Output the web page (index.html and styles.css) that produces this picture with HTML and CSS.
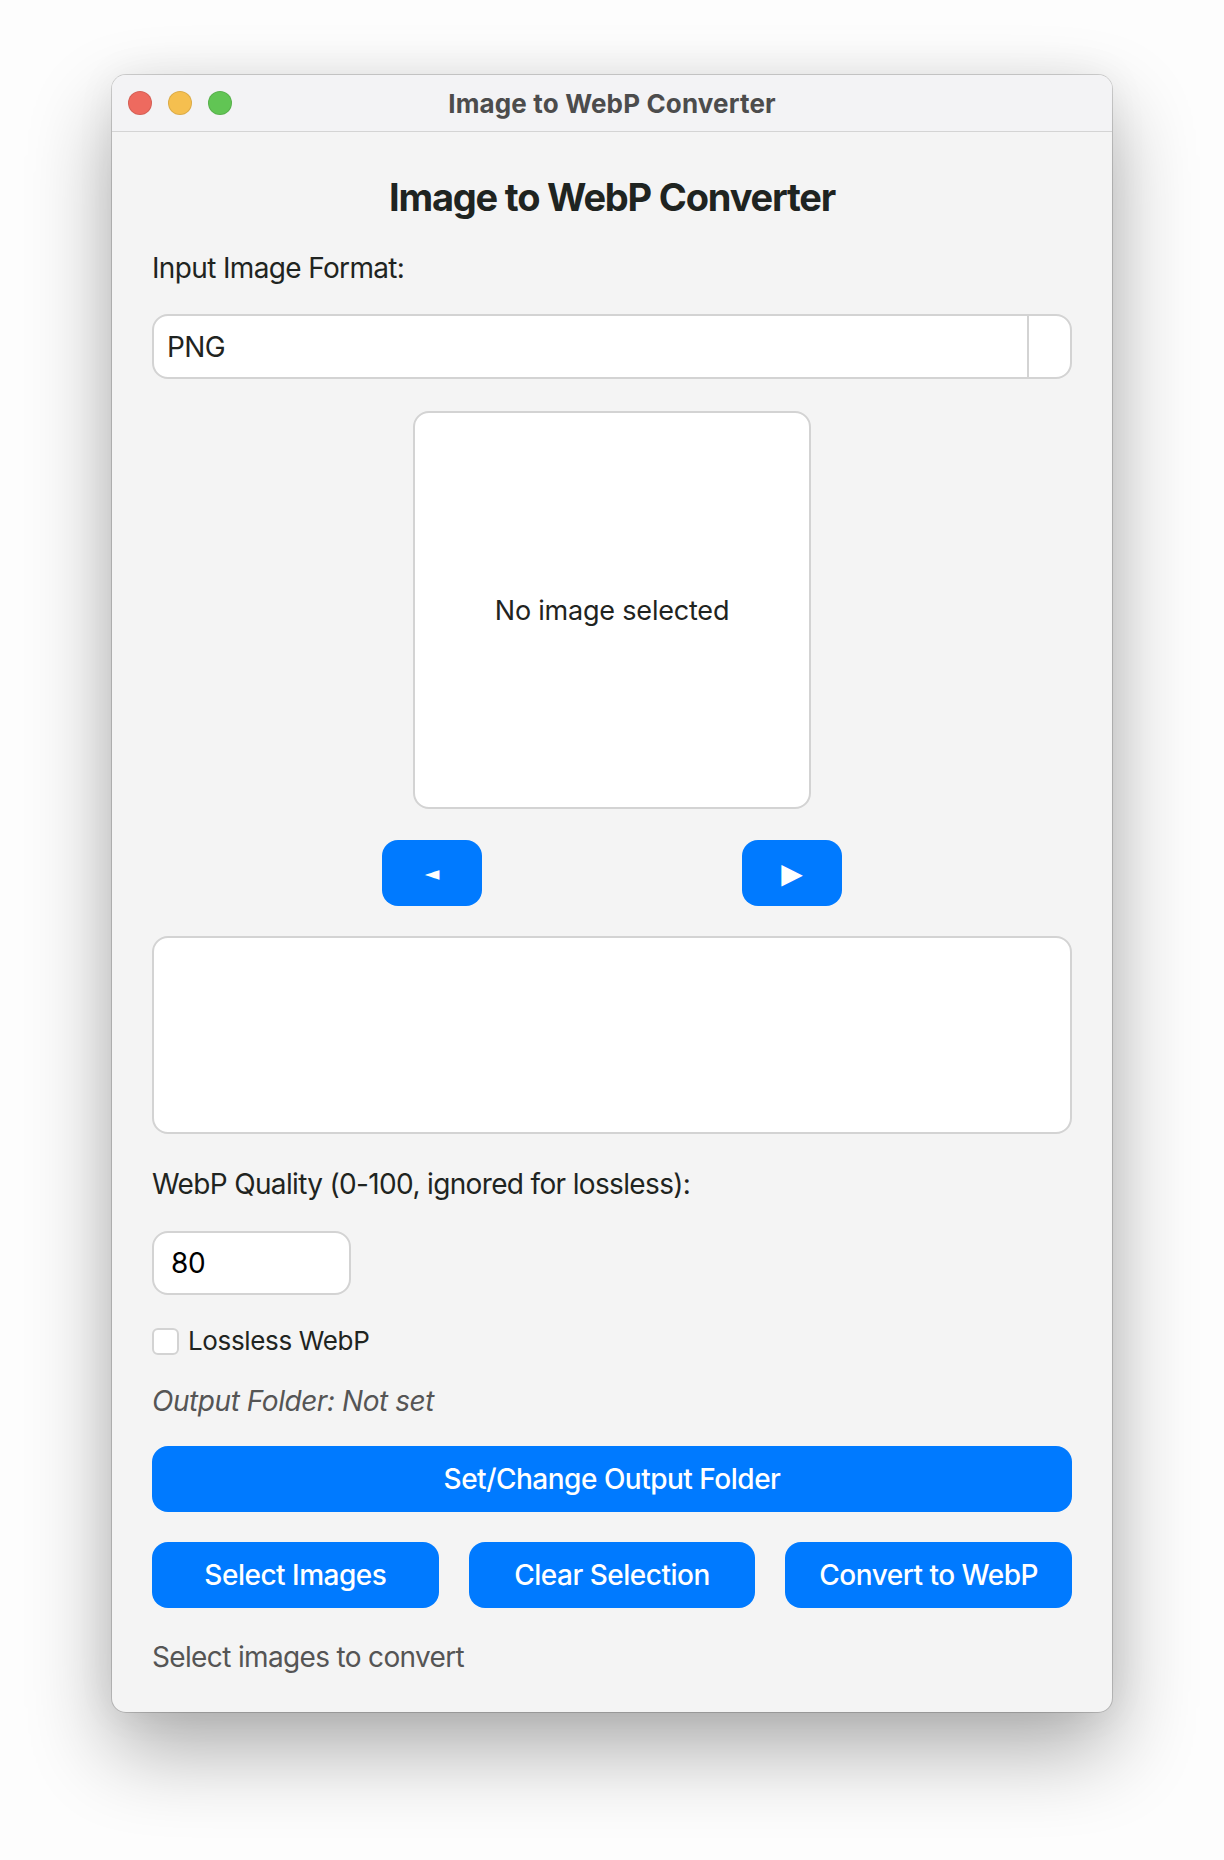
FILE: index.html
```html
<!DOCTYPE html>
<html lang="en">
<head>
  <meta charset="UTF-8">
  <title>Image to WebP Converter</title>
  <link rel="stylesheet" href="styles.css">
</head>
<body>
  <div class="desk">
    <div class="window">
      <div class="titlebar">
        <div class="lights">
          <span class="light red"></span>
          <span class="light yellow"></span>
          <span class="light green"></span>
        </div>
        <div class="wintitle">Image to WebP Converter</div>
      </div>
      <div class="content">
        <h1>Image to WebP Converter</h1>
        <label class="lbl fmt-lbl">Input Image Format:</label>
        <div class="select">
          <span class="select-val">PNG</span>
          <span class="select-arrow"></span>
        </div>
        <div class="preview">No image selected</div>
        <div class="nav">
          <button class="btn nav-btn prev">◄</button>
          <button class="btn nav-btn next">▶</button>
        </div>
        <div class="listbox"></div>
        <label class="lbl q-lbl">WebP Quality (0-100, ignored for lossless):</label>
        <input class="quality" type="text" value="80">
        <label class="check">
          <span class="box"></span>
          <span>Lossless WebP</span>
        </label>
        <div class="folder">Output Folder: Not set</div>
        <button class="btn wide">Set/Change Output Folder</button>
        <div class="row">
          <button class="btn">Select Images</button>
          <button class="btn">Clear Selection</button>
          <button class="btn">Convert to WebP</button>
        </div>
        <div class="status">Select images to convert</div>
      </div>
    </div>
  </div>
</body>
</html>
```

FILE: styles.css
```css
body { margin: 0; background: #fdfdfd; font-family: Inter, "Liberation Sans", sans-serif; color: #1f2421; }
.desk { padding: 75px 112px 148px; }
.window { width: 1000px; background: #f4f4f4; border-radius: 14px; overflow: hidden;
  box-shadow: 0 0 0 1px rgba(0,0,0,.16), 0 38px 84px rgba(0,0,0,.32), 0 0 40px rgba(0,0,0,.06); }

.titlebar { height: 56px; border-bottom: 1px solid #d4d4d4; background: #f3f3f5; display: flex; align-items: center; position: relative; }
.lights { display: flex; gap: 16px; padding-left: 16px; }
.light { width: 24px; height: 24px; border-radius: 50%; box-sizing: border-box; border: 1px solid rgba(0,0,0,.1); }
.red { background: #ee6a5f; }
.yellow { background: #f5bf4f; }
.green { background: #61c554; }
.wintitle { position: absolute; left: 0; right: 0; text-align: center; font-weight: 700; font-size: 26px; letter-spacing: 0.15px; color: #4c4c4c; pointer-events: none; }

.content { padding: 0 40px 38px; display: flex; flex-direction: column; letter-spacing: -0.65px; }
h1 { margin: 42px 0 0; font-size: 38px; line-height: 46px; font-weight: 700; text-align: center; letter-spacing: -1.2px; }
.lbl { font-size: 28px; line-height: 34px; }
.fmt-lbl { margin-top: 31px; }
.select { margin-top: 29px; height: 61px; border: 2px solid #d3d3d3; border-radius: 16px; background: #fff; display: flex; align-items: center; }
.select-val { flex: 1; padding-left: 13px; font-size: 28px; }
.select-arrow { width: 41px; height: 100%; border-left: 2px solid #d3d3d3; }

.preview { margin: 32px auto 0; width: 394px; height: 394px; border: 2px solid #d3d3d3; border-radius: 16px; background: #fff;
  display: flex; align-items: center; justify-content: center; font-size: 27px; letter-spacing: -0.2px; }

.btn { font-family: inherit; border: 0; border-radius: 16px; background: #007aff; color: #fff; font-size: 28px; font-weight: 500; letter-spacing: -0.5px; height: 66px; padding: 0; }
.nav { margin-top: 31px; display: flex; justify-content: center; gap: 260px; }
.nav-btn { width: 100px; font-family: "DejaVu Sans", sans-serif; letter-spacing: 0; }
.prev { font-size: 19px; }
.next { font-size: 28px; }

.listbox { margin-top: 30px; height: 194px; border: 2px solid #d3d3d3; border-radius: 16px; background: #fff; }
.q-lbl { margin-top: 33px; }
.quality { margin-top: 30px; width: 199px; height: 64px; box-sizing: border-box; border: 2px solid #d3d3d3; border-radius: 16px; background: #fff;
  font-family: inherit; font-size: 28px; letter-spacing: -0.3px; padding: 0 17px; color: #000; outline: none; }
.check { margin-top: 29px; display: flex; align-items: center; gap: 9px; font-size: 26px; letter-spacing: -0.35px; line-height: 34px; }
.box { width: 27px; height: 27px; box-sizing: border-box; border: 2px solid #d3d3d3; border-radius: 6px; background: #fff; }
.folder { margin-top: 26px; font-size: 28px; line-height: 34px; font-style: italic; color: #555; letter-spacing: -0.45px; }
.wide { margin-top: 28px; width: 100%; }
.row { margin-top: 30px; display: grid; grid-template-columns: repeat(3, 1fr); gap: 30px; }
.status { margin-top: 32px; font-size: 28px; line-height: 34px; color: #555; }
```
